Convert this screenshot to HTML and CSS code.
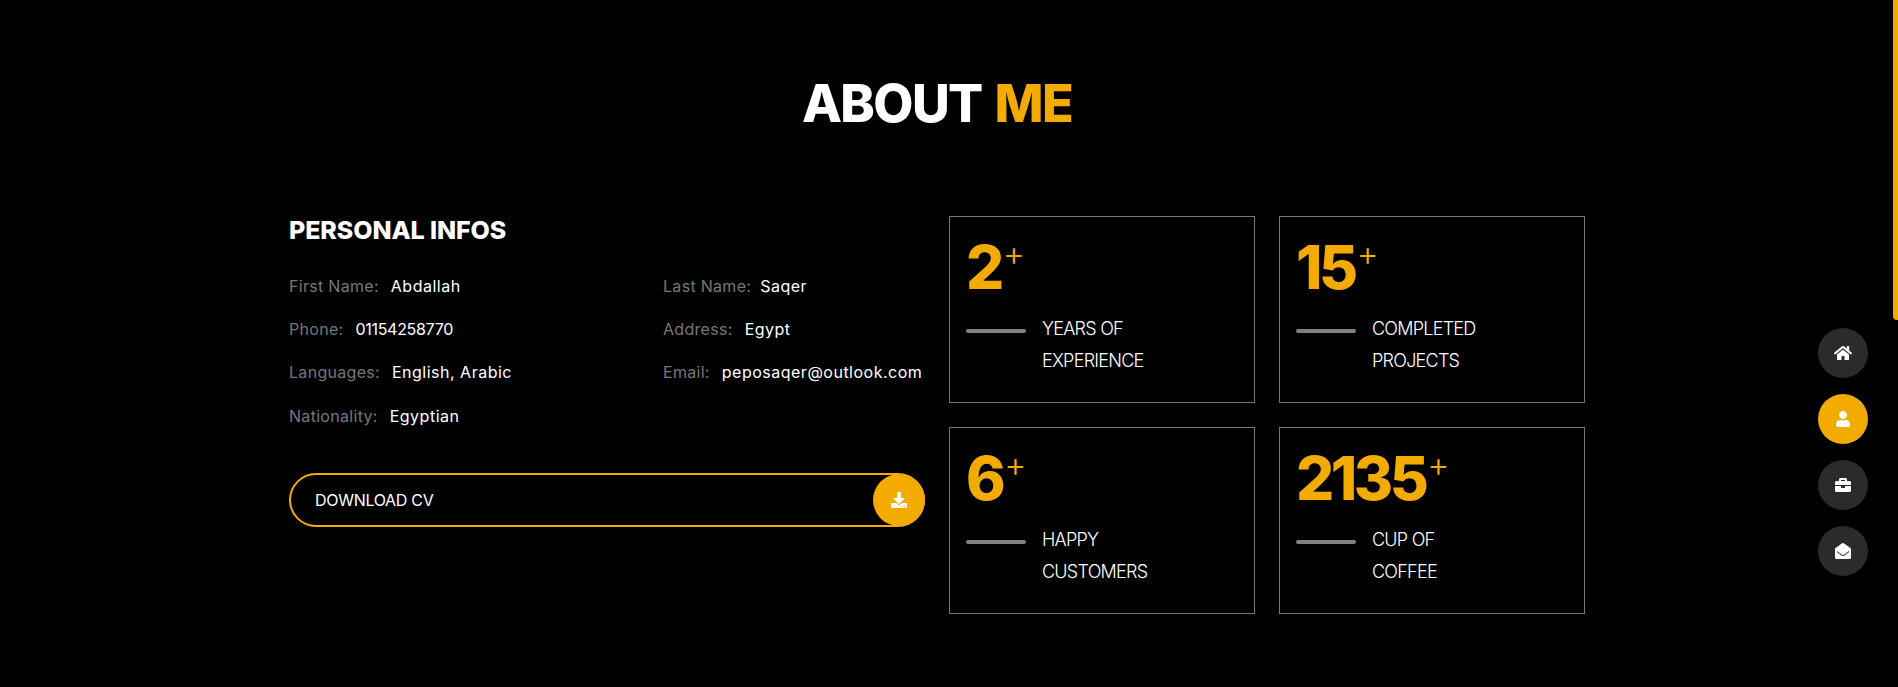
FILE: index.html
```html
<!DOCTYPE html>
<html>
<head>
  <title>About Me</title>
  <link rel="stylesheet" href="styles.css">
</head>
<body>
  <div class="scroll-progress"></div>

  <section class="about">
    <h1 class="about-title">ABOUT <span class="gold">ME</span></h1>

    <div class="about-row">
      <div class="infos">
        <h3 class="infos-title">PERSONAL INFOS</h3>
        <ul class="info-list">
          <li><span class="info-label">First Name:</span><span class="info-value">Abdallah</span></li>
          <li><span class="info-label tight">Last Name:</span><span class="info-value">Saqer</span></li>
          <li><span class="info-label">Phone:</span><span class="info-value digits">01154258770</span></li>
          <li><span class="info-label">Address:</span><span class="info-value">Egypt</span></li>
          <li><span class="info-label">Languages:</span><span class="info-value">English, Arabic</span></li>
          <li><span class="info-label">Email:</span><span class="info-value">peposaqer@outlook.com</span></li>
          <li><span class="info-label">Nationality:</span><span class="info-value">Egyptian</span></li>
        </ul>
        <a class="cv-button" href="#">
          <span>DOWNLOAD CV</span>
          <span class="cv-icon">
            <svg viewBox="0 0 512 512" width="16" height="16"><path fill="#fff" d="M216 0h80c13.3 0 24 10.7 24 24v168h87.7c17.8 0 26.7 21.5 14.1 34.1L269.7 378.3c-7.5 7.5-19.8 7.5-27.3 0L90.1 226.1c-12.6-12.6-3.7-34.1 14.1-34.1H192V24c0-13.3 10.7-24 24-24zm296 376v112c0 13.3-10.7 24-24 24H24c-13.3 0-24-10.7-24-24V376c0-13.3 10.7-24 24-24h146.7l49 49c20.1 20.1 52.5 20.1 72.6 0l49-49H488c13.3 0 24 10.7 24 24zm-124 88c0-11-9-20-20-20s-20 9-20 20 9 20 20 20 20-9 20-20zm64 0c0-11-9-20-20-20s-20 9-20 20 9 20 20 20 20-9 20-20z"/></svg>
          </span>
        </a>
      </div>

      <div class="stats">
        <div class="stat">
          <div class="stat-num">2<span class="stat-plus">+</span></div>
          <div class="stat-text"><span class="stat-line"></span><p>YEARS OF<br>EXPERIENCE</p></div>
        </div>
        <div class="stat">
          <div class="stat-num">15<span class="stat-plus">+</span></div>
          <div class="stat-text"><span class="stat-line"></span><p>COMPLETED<br>PROJECTS</p></div>
        </div>
        <div class="stat">
          <div class="stat-num">6<span class="stat-plus">+</span></div>
          <div class="stat-text"><span class="stat-line"></span><p>HAPPY<br>CUSTOMERS</p></div>
        </div>
        <div class="stat">
          <div class="stat-num">2135<span class="stat-plus">+</span></div>
          <div class="stat-text"><span class="stat-line"></span><p>CUP OF<br>COFFEE</p></div>
        </div>
      </div>
    </div>
  </section>

  <nav class="side-nav">
    <a class="nav-item" href="#">
      <svg viewBox="0 0 576 512" width="18" height="16"><path fill="#fff" d="M280.37 148.26L96 300.11V464a16 16 0 0 0 16 16l112.06-.29a16 16 0 0 0 15.92-16V368a16 16 0 0 1 16-16h64a16 16 0 0 1 16 16v95.64a16 16 0 0 0 16 16.05L464 480a16 16 0 0 0 16-16V300L295.67 148.26a12.19 12.19 0 0 0-15.3 0zM571.6 251.47L488 182.56V44.05a12 12 0 0 0-12-12h-56a12 12 0 0 0-12 12v72.61L318.47 43a48 48 0 0 0-61 0L4.34 251.47a12 12 0 0 0-1.6 16.9l25.5 31A12 12 0 0 0 45.15 301l235.22-193.74a12.19 12.19 0 0 1 15.3 0L530.9 301a12 12 0 0 0 16.9-1.6l25.5-31a12 12 0 0 0-1.7-16.93z"/></svg>
    </a>
    <a class="nav-item active" href="#">
      <svg viewBox="0 0 448 512" width="14" height="16"><path fill="#fff" d="M224 256c70.7 0 128-57.3 128-128S294.7 0 224 0 96 57.3 96 128s57.3 128 128 128zm89.6 32h-16.7c-22.2 10.2-46.9 16-72.9 16s-50.6-5.8-72.9-16h-16.7C60.2 288 0 348.2 0 422.4V464c0 26.5 21.5 48 48 48h352c26.5 0 48-21.5 48-48v-41.6c0-74.2-60.2-134.4-134.4-134.4z"/></svg>
    </a>
    <a class="nav-item" href="#">
      <svg viewBox="0 0 512 512" width="16" height="16"><path fill="#fff" d="M320 336c0 8.84-7.16 16-16 16h-96c-8.84 0-16-7.16-16-16v-48H0v144c0 25.6 22.4 48 48 48h416c25.6 0 48-22.4 48-48V288H320v48zm144-208h-80V80c0-25.6-22.4-48-48-48H176c-25.6 0-48 22.4-48 48v48H48c-25.6 0-48 22.4-48 48v80h512v-80c0-25.6-22.4-48-48-48zm-144 0H192V96h128v32z"/></svg>
    </a>
    <a class="nav-item" href="#">
      <svg viewBox="0 0 512 512" width="16" height="16"><path fill="#fff" d="M512 464c0 26.51-21.49 48-48 48H48c-26.51 0-48-21.49-48-48V200.724a48 48 0 0 1 18.387-37.776c24.913-19.529 45.501-35.365 164.2-121.511C199.412 29.17 232.797-.347 256 .003c23.198-.354 56.596 29.172 73.413 41.433 118.687 86.137 139.303 101.995 164.2 121.512A48 48 0 0 1 512 200.724V464zm-65.666-196.605c-2.563-3.728-7.7-4.595-11.339-1.907-22.845 16.873-55.462 40.705-105.582 77.079-16.825 12.266-50.21 41.781-73.413 41.43-23.211.344-56.559-29.143-73.413-41.43-50.114-36.37-82.734-60.204-105.582-77.079-3.639-2.688-8.776-1.821-11.339 1.907l-9.072 13.196a7.998 7.998 0 0 0 1.839 10.967c22.887 16.899 55.454 40.69 105.303 76.868 20.274 14.781 56.524 47.813 92.264 47.573 35.724.242 71.961-32.771 92.263-47.573 49.85-36.179 82.418-59.97 105.303-76.868a7.998 7.998 0 0 0 1.839-10.967l-9.071-13.196z"/></svg>
    </a>
  </nav>
</body>
</html>
```

FILE: styles.css
```css
* {
  box-sizing: border-box;
}

body {
  margin: 0;
  background-color: #000;
  color: #fff;
  font-family: Inter, "Open Sans", sans-serif;
}

.gold {
  color: #f4ab00;
}

.scroll-progress {
  position: fixed;
  top: 0;
  right: 0;
  width: 5px;
  height: 320px;
  background-color: #f4ab00;
  border-radius: 0 0 0 4px;
}

.about {
  padding: 74px 313px 74px 289px;
}

.about-title {
  margin: 0 0 82px;
  font-size: 52px;
  line-height: 60px;
  font-weight: 800;
  letter-spacing: -1.6px;
  word-spacing: 3px;
  text-align: center;
}

.about-row {
  display: grid;
  grid-template-columns: 636px 636px;
  gap: 24px;
}

.infos-title {
  margin: 0 0 19px;
  font-size: 25px;
  line-height: 29px;
  font-weight: 800;
  letter-spacing: -0.1px;
}

.info-list {
  display: grid;
  grid-template-columns: 374px 1fr;
  grid-auto-rows: 43.33px;
  align-items: center;
  margin: 0 0 36px;
  padding: 0;
  list-style: none;
  font-size: 16px;
}

.info-label {
  margin-right: 12px;
  color: #777;
  letter-spacing: 0.3px;
}

.info-label.tight {
  margin-right: 9px;
}

.info-value {
  letter-spacing: 0.5px;
}

.info-value.digits {
  letter-spacing: -0.3px;
}

.cv-button {
  display: flex;
  align-items: center;
  justify-content: space-between;
  height: 54px;
  padding-left: 24px;
  border: 2px solid #f4ab00;
  border-radius: 27px;
  color: #fff;
  font-size: 16px;
  letter-spacing: -0.3px;
  text-decoration: none;
}

.cv-icon {
  display: flex;
  flex: none;
  align-items: center;
  justify-content: center;
  width: 52px;
  height: 52px;
  margin-right: -2px;
  border-radius: 50%;
  background-color: #f4ab00;
}

.stats {
  display: grid;
  grid-template-columns: 1fr 1fr;
  gap: 24px;
}

.stat {
  height: 187px;
  padding: 20px 16px 0;
  border: 1px solid #777;
}

.stat-num {
  display: flex;
  align-items: flex-start;
  height: 60px;
  color: #f4ab00;
  font-size: 60px;
  line-height: 60px;
  font-weight: 800;
  letter-spacing: -3.5px;
}

.stat-plus {
  margin-left: 2px;
  font-size: 34px;
  line-height: 34px;
  font-weight: 300;
  letter-spacing: 0;
}

.stat-text {
  display: flex;
  gap: 16px;
  margin-top: 16px;
}

.stat-line {
  flex: none;
  width: 60px;
  height: 4px;
  margin-top: 16px;
  border-radius: 2px;
  background-color: #808080;
}

.stat-text p {
  margin: 0;
  font-size: 18px;
  line-height: 32px;
  font-weight: 300;
  letter-spacing: -0.75px;
}

.side-nav {
  position: fixed;
  top: 328px;
  right: 30px;
  display: flex;
  flex-direction: column;
  gap: 16px;
}

.nav-item {
  display: flex;
  align-items: center;
  justify-content: center;
  width: 50px;
  height: 50px;
  border-radius: 50%;
  background-color: #2b2b2b;
}

.nav-item.active {
  background-color: #f4ab00;
}
```
